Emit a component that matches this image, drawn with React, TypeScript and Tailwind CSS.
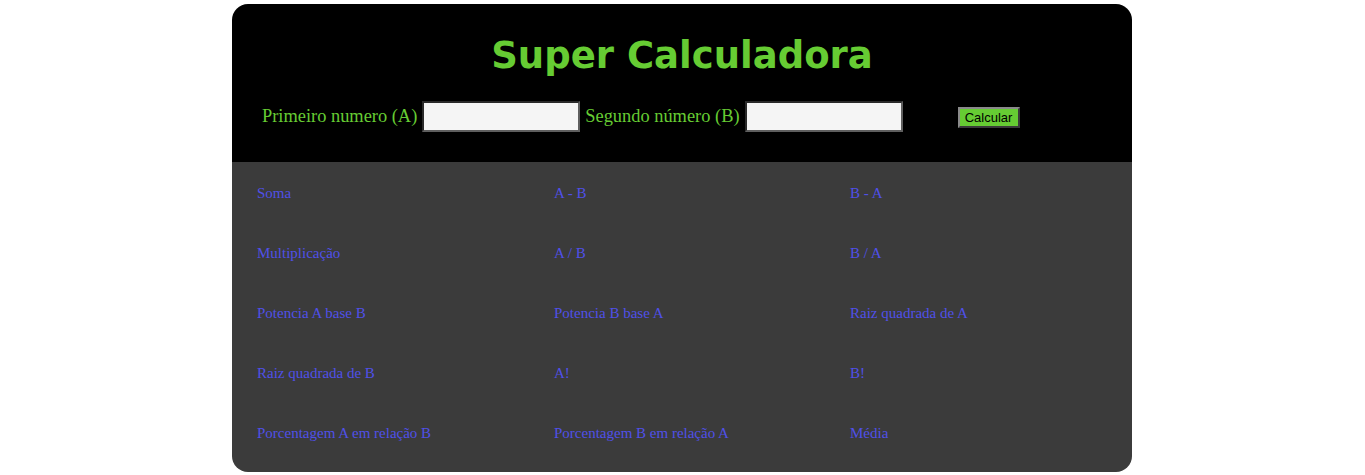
import React from "react";

const items = [
  "Soma", "A - B", "B - A",
  "Multiplicação", "A / B", "B / A",
  "Potencia A base B", "Potencia B base A", "Raiz quadrada de A",
  "Raiz quadrada de B", "A!", "B!",
  "Porcentagem A em relação B", "Porcentagem B em relação A", "Média",
];

export default function App() {
  return (
    <div className="bg-white min-h-[475px] pt-[4px] pr-[1px]">
      <div className="mx-auto w-[900px] rounded-[16px] overflow-hidden">
        <div className="bg-black h-[158px] flex flex-col">
          <h1
            className="text-center text-[37px] font-bold text-[#66cc33] leading-[44px] mt-[30px]"
            style={{ fontFamily: '"DejaVu Sans", Verdana, sans-serif' }}
          >
            Super Calculadora
          </h1>
          <div
            className="flex items-center mt-[23px] pl-[30px] text-[18.4px] text-[#66cc33]"
            style={{ fontFamily: '"Liberation Serif", "Times New Roman", serif' }}
          >
            <span>Primeiro numero (A)</span>
            <input
              type="text"
              className="ml-[5px] w-[158px] h-[31px] bg-[#f5f5f5] border-2 border-t-[#2a2a2a] border-l-[#2a2a2a] border-b-[#5f5f5f] border-r-[#5f5f5f] outline-none"
            />
            <span className="ml-[5px]">Segundo número (B)</span>
            <input
              type="text"
              className="ml-[5px] w-[158px] h-[31px] bg-[#f5f5f5] border-2 border-t-[#2a2a2a] border-l-[#2a2a2a] border-b-[#5f5f5f] border-r-[#5f5f5f] outline-none"
            />
            <button
              className="ml-[55px] mt-[2px] w-[62px] h-[21px] bg-[#66cc33] text-black text-[13px] leading-none border-2 border-t-[#8a8a8a] border-l-[#8a8a8a] border-b-[#3a3a3a] border-r-[#3a3a3a]"
              style={{ fontFamily: '"Liberation Sans", Arial, sans-serif' }}
            >
              Calcular
            </button>
          </div>
        </div>
        <div
          className="bg-[#3b3b3b] pl-[25px] pb-[10px] grid grid-cols-[297px_296px_1fr] text-[15px] text-[#5050e8]"
          style={{ fontFamily: '"Liberation Serif", "Times New Roman", serif' }}
        >
          {items.map((t) => (
            <div key={t} className="h-[60px] flex items-center pt-[2px]">
              {t}
            </div>
          ))}
        </div>
      </div>
    </div>
  );
}
